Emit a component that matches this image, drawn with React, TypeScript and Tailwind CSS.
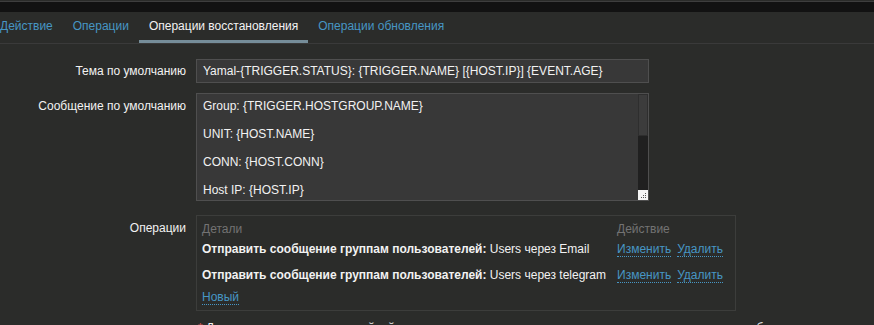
const tabs = ['Действие', 'Операции', 'Операции восстановления', 'Операции обновления'];

const messageLines = [
  'Group: {TRIGGER.HOSTGROUP.NAME}',
  '',
  'UNIT: {HOST.NAME}',
  '',
  'CONN: {HOST.CONN}',
  '',
  'Host IP: {HOST.IP}',
];

const operations = [
  { kind: 'Отправить сообщение группам пользователей:', target: 'Users через Email' },
  { kind: 'Отправить сообщение группам пользователей:', target: 'Users через telegram' },
];

function Link({ children }: { children: React.ReactNode }) {
  return (
    <span className="inline-block text-[#4796c4] border-b border-dotted border-[#4796c4] leading-[14px]">{children}</span>
  );
}

export default function App() {
  const active = 2;

  return (
    <div
      className="w-[874px] h-[325px] overflow-hidden bg-[#2b2c2a] text-[12px] leading-[14px] text-[#f2f2f2]"
      style={{ fontFamily: '"Liberation Sans", Arial, sans-serif' }}
    >
      {/* top strip */}
      <div className="h-px bg-[#2b2c2a]" />
      <div className="h-px bg-[#3e3e3e]" />
      <div className="h-[10px] bg-[#121212]" />

      {/* tabs */}
      <div className="h-[32px] border-b border-[#3a3a3a] flex -ml-[10px]">
        {tabs.map((t, i) => (
          <div
            key={t}
            className={
              i === active
                ? 'px-[10px] flex items-center border-b-[3px] border-[#768d99] text-[#f2f2f2] whitespace-nowrap'
                : 'px-[10px] flex items-center border-b-[3px] border-transparent text-[#4796c4] whitespace-nowrap'
            }
          >
            {t}
          </div>
        ))}
      </div>

      {/* form */}
      <div className="pt-[15px]">
        <div className="flex items-center">
          <div className="w-[186px] text-right shrink-0">Тема по умолчанию</div>
          <div className="ml-[10px] w-[453px] h-[24px] border border-[#4f4f4f] bg-[#383838] px-[6px] flex items-center whitespace-nowrap">
            Yamal-{'{TRIGGER.STATUS}'}: {'{TRIGGER.NAME}'} [{'{HOST.IP}'}] {'{EVENT.AGE}'}
          </div>
        </div>

        <div className="flex mt-[10px]">
          <div className="w-[186px] text-right shrink-0 pt-[6px]">Сообщение по умолчанию</div>
          <div className="ml-[10px] w-[453px] h-[108px] border border-[#4f4f4f] bg-[#383838] flex overflow-hidden">
            <div className="flex-1 pl-[6px] pt-[5px]">
              {messageLines.map((l, i) => (
                <div key={i} className="h-[14px] whitespace-nowrap">{l}</div>
              ))}
            </div>
            <div className="w-[10px] flex flex-col">
              <div className="h-[42px] bg-[#3c3c3c] border border-[#2e2e2e]" />
              <div className="flex-1 bg-[#202020]" />
              <div className="h-[10px] bg-[#f5f5f5] flex items-end justify-end p-px">
                <svg width="6" height="6" viewBox="0 0 6 6">
                  <rect x="4" y="0" width="1" height="1" fill="#555" />
                  <rect x="2" y="2" width="1" height="1" fill="#555" />
                  <rect x="4" y="2" width="1" height="1" fill="#555" />
                  <rect x="0" y="4" width="1" height="1" fill="#555" />
                  <rect x="2" y="4" width="1" height="1" fill="#555" />
                  <rect x="4" y="4" width="1" height="1" fill="#555" />
                </svg>
              </div>
            </div>
          </div>
        </div>

        <div className="flex mt-[14px]">
          <div className="w-[186px] text-right shrink-0 pt-[6px]">Операции</div>
          <div className="ml-[10px] w-[540px] h-[96px] border border-[#3c3d3b] pl-[5px] pt-[6px]">
            <div className="grid grid-cols-[415px_auto] text-[#737373]">
              <div>Детали</div>
              <div>Действие</div>
            </div>
            {operations.map((op, i) => (
              <div key={i} className={i === 0 ? 'grid grid-cols-[415px_auto] mt-[6px]' : 'grid grid-cols-[415px_auto] mt-[11px]'}>
                <div className="whitespace-nowrap">
                  <span className="font-bold">{op.kind}</span> {op.target}
                </div>
                <div className="flex gap-[6px]">
                  <Link>Изменить</Link>
                  <Link>Удалить</Link>
                </div>
              </div>
            ))}
            <div className="mt-[7px]">
              <Link>Новый</Link>
            </div>
          </div>
        </div>

        <div className="flex mt-[10px]">
          <div className="w-[186px] shrink-0" />
          <div className="ml-[12px] whitespace-nowrap">
            <span className="text-[#e45959]">*</span> Должна существовать по крайней мере одна операция, операция восстановления или операция обновления.
          </div>
        </div>
      </div>
    </div>
  );
}
